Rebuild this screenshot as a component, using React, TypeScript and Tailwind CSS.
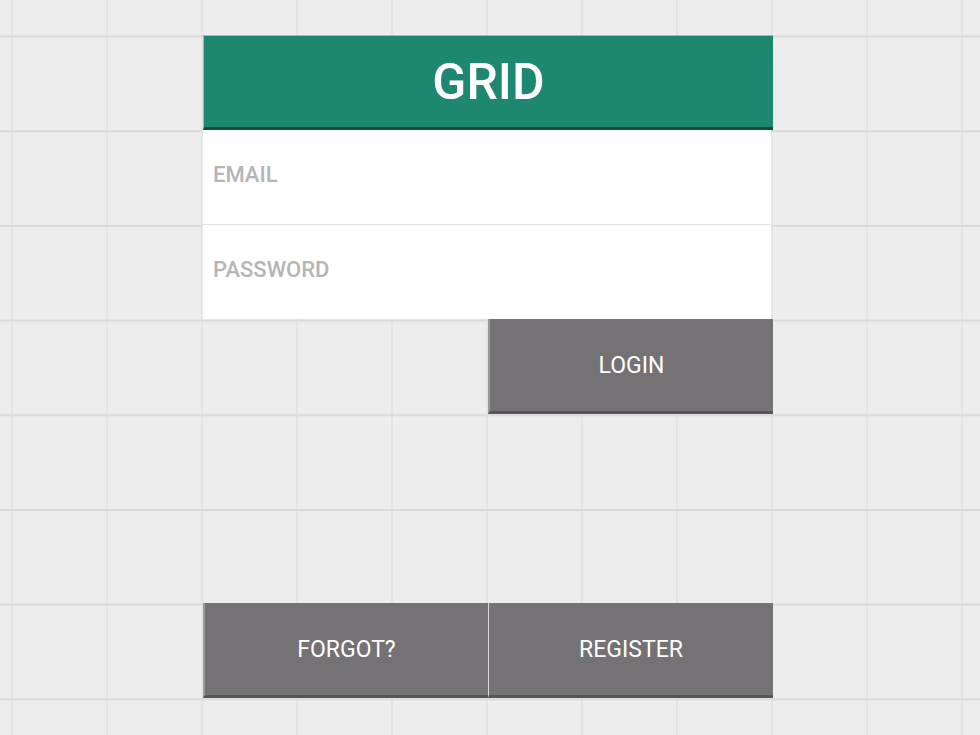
import React from "react";

export default function App() {
  return (
    <div
      className="w-full h-[735px] overflow-hidden bg-[#ededed] bg-[linear-gradient(to_right,#dadada_1.5px,transparent_1.5px),linear-gradient(to_bottom,#dadada_1.5px,transparent_1.5px)] bg-[size:95px_94.7px] bg-[position:11.5px_35.5px]"
      style={{ fontFamily: "Roboto, 'Liberation Sans', sans-serif" }}
    >
      <div className="ml-[203px] pt-[35px] w-[570px] flex flex-col">
        <div className="h-[95px] bg-[#1d8770] border-b-[3px] border-[#0f4d40] border-t border-t-[#7fcab8] border-l border-l-[#7fcab8] flex items-center justify-center">
          <span className="text-white text-[50px] font-medium leading-none">GRID</span>
        </div>
        <div className="w-[568px] h-[95px] bg-white border-b border-[#e3e3e3] flex items-center pl-[10px] pb-[4px]">
          <span className="text-[#b5b5b5] text-[22px] font-medium leading-none">EMAIL</span>
        </div>
        <div className="w-[568px] h-[94px] bg-white flex items-center pl-[10px] pb-[4px]">
          <span className="text-[#b5b5b5] text-[22px] font-medium leading-none">PASSWORD</span>
        </div>
        <div className="flex">
          <div className="w-[285px]" />
          <button className="w-[285px] h-[95px] bg-[#747274] border-b-[3px] border-[#565456] border-l-2 border-l-[#9a989a] flex items-center justify-center">
            <span className="text-white text-[23px] leading-none">LOGIN</span>
          </button>
        </div>
        <div className="h-[189px]" />
        <div className="flex">
          <button className="w-[285px] h-[95px] bg-[#747274] border-b-[3px] border-[#565456] border-l-2 border-l-[#9a989a] flex items-center justify-center">
            <span className="text-white text-[23px] leading-none">FORGOT?</span>
          </button>
          <button className="w-[285px] h-[95px] bg-[#747274] border-b-[3px] border-[#565456] border-l border-l-[#d8d8d8] flex items-center justify-center">
            <span className="text-white text-[23px] leading-none">REGISTER</span>
          </button>
        </div>
      </div>
    </div>
  );
}
